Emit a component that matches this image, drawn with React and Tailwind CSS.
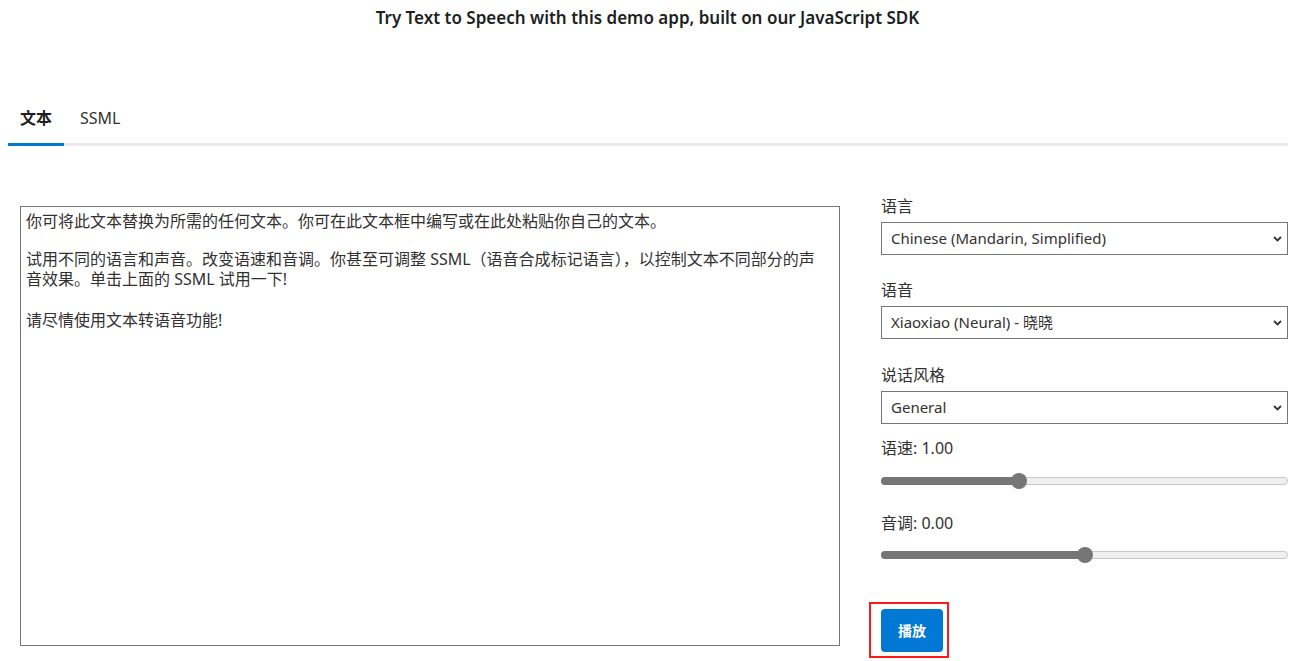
import React from "react";

const font = { fontFamily: '"Noto Sans", "Noto Sans CJK SC", sans-serif' };

function Chevron() {
  return (
    <svg width="9" height="6" viewBox="0 0 9 6" className="shrink-0">
      <path d="M1 1 L4.5 4.5 L8 1" fill="none" stroke="#333" strokeWidth="1.8" />
    </svg>
  );
}

function Select({ value }) {
  return (
    <div className="flex h-[33px] items-center justify-between border border-[#767676] bg-white pl-[9px] pr-[5px] text-[15px] text-[#323130]">
      <span>{value}</span>
      <Chevron />
    </div>
  );
}

function Slider({ pct }) {
  return (
    <div className="relative h-[16px] w-full">
      <div className="absolute left-0 right-0 top-[4px] h-[8px] rounded-full border border-[#c8c8c8] bg-[#efefef]" />
      <div
        className="absolute left-0 top-[4px] h-[8px] rounded-full bg-[#767676]"
        style={{ width: `${pct}%` }}
      />
      <div
        className="absolute top-0 h-[16px] w-[16px] -translate-x-1/2 rounded-full bg-[#767676]"
        style={{ left: `${pct}%` }}
      />
    </div>
  );
}

export default function App() {
  return (
    <div className="min-h-[661px] w-[1310px] bg-white text-[#323130]" style={font}>
      <div className="flex h-[36px] w-[1295px] items-center justify-center text-[17px] font-semibold text-[#201f1e]">
        Try Text to Speech with this demo app, built on our JavaScript SDK
      </div>

      <div className="ml-2 w-[1280px]">
        <div className="mt-[61px] flex border-b-[3px] border-[#eaeaea] text-[16px] leading-[21px]">
          <div className="-mb-[3px] border-b-[3px] border-[#0078d4] px-3 pb-[14px] pt-[11px] font-semibold text-[#201f1e]">
            文本
          </div>
          <div className="ml-1 px-3 pb-[14px] pt-[11px] text-[#323130]">SSML</div>
        </div>

        <div className="mt-[50px] flex items-start">
          <div className="ml-[12px] mt-[10px] h-[440px] w-[820px] border border-[#767676] pl-[5px] pr-[20px] pt-[4px] text-[16px] leading-[20px] text-[#323130]">
            <p>你可将此文本替换为所需的任何文本。你可在此文本框中编写或在此处粘贴你自己的文本。</p>
            <p className="mt-[18px]">
              试用不同的语言和声音。改变语速和音调。你甚至可调整 SSML（语音合成标记语言），以控制文本不同部分的声音效果。单击上面的 SSML 试用一下!
            </p>
            <p className="mt-[21px]">请尽情使用文本转语音功能!</p>
          </div>

          <div className="ml-[41px] flex w-[407px] flex-col text-[16px] leading-[21px]">
            <div>语言</div>
            <div className="mt-[5px]">
              <Select value="Chinese (Mandarin, Simplified)" />
            </div>
            <div className="mt-[25px]">语音</div>
            <div className="mt-[5px]">
              <Select value="Xiaoxiao (Neural) - 晓晓" />
            </div>
            <div className="mt-[26px]">说话风格</div>
            <div className="mt-[5px]">
              <Select value="General" />
            </div>
            <div className="mt-[14px]">语速: 1.00</div>
            <div className="mt-[14px]">
              <Slider pct={34} />
            </div>
            <div className="mt-[24px]">音调: 0.00</div>
            <div className="mt-[13px]">
              <Slider pct={50} />
            </div>
            <div className="-ml-[12px] mt-[39px] self-start border-2 border-[#ff1a1a] pb-[4px] pl-[10px] pr-[4px] pt-[5px]">
              <button className="flex h-[43px] w-[62px] items-center justify-center rounded-[4px] bg-[#0078d4] text-[14px] font-bold text-white">
                播放
              </button>
            </div>
          </div>
        </div>
      </div>
    </div>
  );
}
